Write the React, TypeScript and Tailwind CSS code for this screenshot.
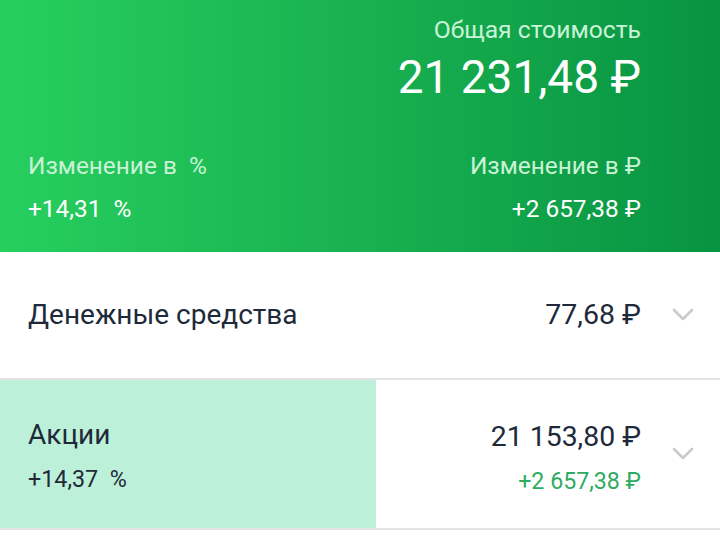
const font = { fontFamily: 'Roboto, "Noto Sans", sans-serif' };

function Chevron() {
    return (
        <svg width="22" height="14" viewBox="0 0 22 14" className="ml-[31px] shrink-0">
            <polyline points="2,2 11,11 20,2" fill="none" stroke="#cacaca" strokeWidth="2.6" strokeLinecap="round" strokeLinejoin="round" />
        </svg>
    );
}

export default function App() {
    return (
        <div className="w-[720px] h-[536px] bg-white overflow-hidden" style={font}>
            {/* Header */}
            <div className="h-[252px] bg-gradient-to-r from-[#27cf5f] to-[#079442] px-[28px] pt-[14px] flex flex-col">
                <div className="pr-[51px] flex flex-col items-end">
                    <p className="text-[24.7px] leading-[32px] text-[#c9f3d6]">Общая стоимость</p>
                    <p className="text-[46px] leading-[54px] text-white mt-[4px]">21 231,48 ₽</p>
                </div>
                <div className="flex justify-between pr-[51px] mt-[47px]">
                    <div>
                        <p className="text-[24.4px] leading-[30px] text-[#c9f3d6]">Изменение в&nbsp; %</p>
                        <p className="text-[24.4px] leading-[30px] text-white mt-[13px]">+14,31&nbsp; %</p>
                    </div>
                    <div className="flex flex-col items-end">
                        <p className="text-[24.4px] leading-[30px] text-[#c9f3d6]">Изменение в ₽</p>
                        <p className="text-[24.4px] leading-[30px] text-white mt-[13px]">+2 657,38 ₽</p>
                    </div>
                </div>
            </div>

            {/* Cash row */}
            <div className="h-[128px] flex items-center border-b-2 border-[#e4e4e4] pl-[28px] pr-[26px]">
                <p className="flex-1 text-[28px] text-[#1e2a3a]">Денежные средства</p>
                <p className="text-[28.5px] text-[#1e2a3a]">77,68 ₽</p>
                <Chevron />
            </div>

            {/* Stocks row */}
            <div className="h-[150px] flex border-b-2 border-[#e4e4e4]">
                <div className="w-[376px] bg-[#bdf0d8] pl-[28px] pt-[37px]">
                    <p className="text-[28px] leading-[36px] text-[#1e2a3a]">Акции</p>
                    <p className="text-[23.3px] leading-[30px] text-[#1e2a3a] mt-[11px]">+14,37&nbsp; %</p>
                </div>
                <div className="flex-1 flex items-center pr-[26px]">
                    <div className="flex-1 flex flex-col items-end pt-[7px]">
                        <p className="text-[28.4px] leading-[36px] text-[#1e2a3a]">21 153,80 ₽</p>
                        <p className="text-[23.2px] leading-[30px] text-[#2eab62] mt-[11px]">+2 657,38 ₽</p>
                    </div>
                    <Chevron />
                </div>
            </div>
        </div>
    );
}
